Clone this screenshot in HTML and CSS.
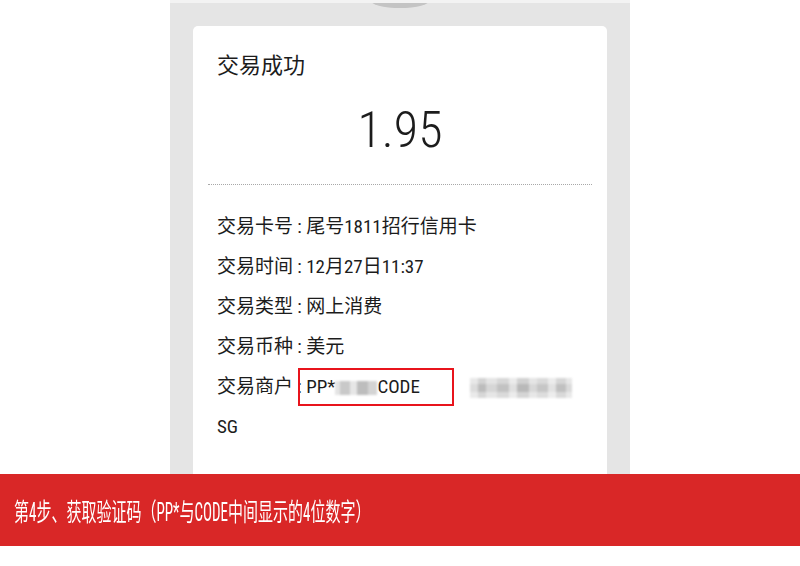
FILE: index.html
```html
<!DOCTYPE html>
<html lang="zh-CN">
<head>
    <meta charset="UTF-8">
    <meta name="viewport" content="width=device-width, initial-scale=1.0">
    <title>获取验证码</title>
    <link rel="stylesheet" href="styles.css">
</head>
<body>
    <div class="phone">
        <div class="handle"></div>
        <div class="card">
            <div class="title">交易成功</div>
            <div class="amount"><span>1.95</span></div>
            <div class="divider"></div>
            <div class="rows">
                <div class="row">交易卡号 : 尾号1811招行信用卡</div>
                <div class="row">交易时间 : 12月27日11:37</div>
                <div class="row">交易类型 : 网上消费</div>
                <div class="row">交易币种 : 美元</div>
                <div class="row">交易商户 : <span class="merchant">PP*<i class="mosaic code"></i>CODE<span class="mark"></span></span><i class="mosaic rest"></i></div>
                <div class="row">SG</div>
            </div>
        </div>
    </div>
    <div class="banner">
        <span>第4步、获取验证码（PP*与CODE中间显示的4位数字）</span>
    </div>
</body>
</html>
```

FILE: styles.css
```css
body {
    margin: 0;
    background-color: #ffffff;
    font-family: 'Roboto Condensed', 'DejaVu Sans Condensed', Roboto, 'Noto Sans CJK SC', sans-serif;
    color: #1c1c1c;
}
.phone {
    width: 460px;
    height: 474px;
    margin: 0 auto;
    background-color: #e5e5e5;
    border-top: 3px solid #f3f3f3;
    box-sizing: border-box;
    overflow: hidden;
    position: relative;
}
.handle {
    position: absolute;
    top: -3px;
    left: 200px;
    width: 60px;
    height: 8px;
    background-color: #c4c4c4;
    border-radius: 0 0 30px 30px / 0 0 8px 8px;
}
.card {
    margin: 23px 23px 0;
    height: 500px;
    background-color: #ffffff;
    border-radius: 5px;
    padding: 25px 24px 0;
}
.title {
    font-size: 22px;
    line-height: 30px;
}
.amount {
    margin-top: 19px;
    text-align: center;
    font-size: 50px;
    font-weight: 300;
    line-height: 60px;
}
.amount span {
    display: inline-block;
}
.divider {
    margin: 24px -9px 0;
    border-top: 1px dotted #a8a8a8;
}
.rows {
    margin-top: 22px;
}
.row {
    font-size: 19px;
    line-height: 40px;
    white-space: nowrap;
}
.merchant {
    position: relative;
}
.mark {
    position: absolute;
    left: -8px;
    top: 50%;
    margin-top: -19px;
    width: 156px;
    height: 38px;
    box-sizing: border-box;
    border: 2.5px solid #e8141c;
}
.mosaic {
    display: inline-block;
    vertical-align: middle;
    filter: blur(1px);
}
.mosaic.code {
    width: 42px;
    height: 14px;
    background: linear-gradient(90deg, #e4e4e4 0 12%, #c9c9c9 12% 35%, #e6e6e6 35% 52%, #bdbdbd 52% 78%, #d4d4d4 78% 100%);
}
.mosaic.rest {
    margin-left: 50px;
    width: 102px;
    height: 20px;
    background:
        linear-gradient(180deg, rgba(255,255,255,0.35) 0 30%, rgba(255,255,255,0) 30% 70%, rgba(255,255,255,0.4) 70% 100%),
        linear-gradient(90deg, #dcdcdc 0 8%, #bcbcbc 8% 16%, #d6d6d6 16% 26%, #c2c2c2 26% 38%, #e0e0e0 38% 46%, #b9b9b9 46% 58%, #d8d8d8 58% 66%, #c6c6c6 66% 76%, #e2e2e2 76% 84%, #c0c0c0 84% 94%, #dadada 94% 100%);
}
.banner {
    height: 72px;
    background-color: #d92727;
    color: #ffffff;
    display: flex;
    align-items: center;
    padding-left: 14px;
    overflow: hidden;
}
.banner span {
    display: inline-block;
    font-size: 25px;
    white-space: nowrap;
    transform: scaleX(0.6);
    transform-origin: left center;
}
```
